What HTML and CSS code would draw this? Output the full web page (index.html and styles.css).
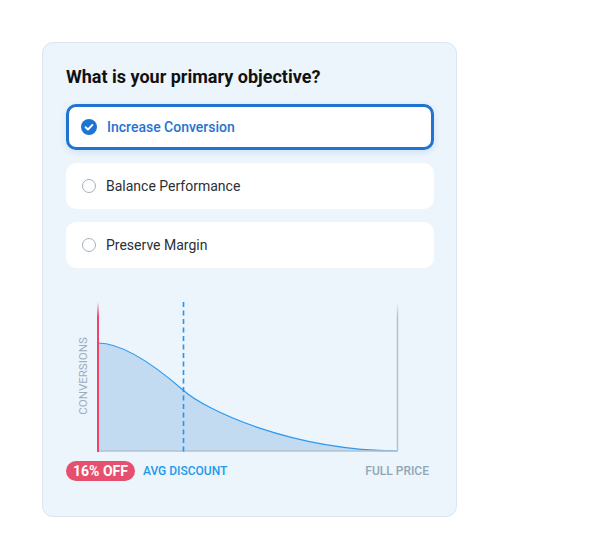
FILE: index.html
```html
<!DOCTYPE html>
<html lang="en">
<head>
  <meta charset="UTF-8">
  <meta name="viewport" content="width=device-width, initial-scale=1.0">
  <title>Objective</title>
  <link rel="stylesheet" href="styles.css">
</head>
<body>
  <div class="card">
    <h2>What is your primary objective?</h2>
    <div class="options">
      <div class="option selected">
        <svg class="check" width="16" height="16" viewBox="0 0 16 16">
          <circle cx="8" cy="8" r="8" fill="#1f74d1"/>
          <path d="M4.6 8.2 L7 10.5 L11.4 5.9" fill="none" stroke="#fff" stroke-width="1.9" stroke-linecap="round" stroke-linejoin="round"/>
        </svg>
        <span>Increase Conversion</span>
      </div>
      <div class="option">
        <span class="radio"></span>
        <span>Balance Performance</span>
      </div>
      <div class="option">
        <span class="radio"></span>
        <span>Preserve Margin</span>
      </div>
    </div>

    <div class="chart">
      <svg width="368" height="160" viewBox="0 0 368 160">
        <defs>
          <linearGradient id="redFade" gradientUnits="userSpaceOnUse" x1="0" y1="6" x2="0" y2="156">
            <stop offset="0" stop-color="#f0436b" stop-opacity="0"/>
            <stop offset="0.1" stop-color="#f0436b" stop-opacity="1"/>
          </linearGradient>
          <linearGradient id="grayFade" gradientUnits="userSpaceOnUse" x1="0" y1="6" x2="0" y2="156">
            <stop offset="0" stop-color="#b3c3d1" stop-opacity="0"/>
            <stop offset="0.1" stop-color="#b3c3d1" stop-opacity="1"/>
          </linearGradient>
        </defs>
        <text class="axis-label" transform="translate(21 80) rotate(-90)" text-anchor="middle">CONVERSIONS</text>
        <path d="M32,47 C59,47 94,74 117,94 C139,114 224,154 331,155 L32,155 Z" fill="#c3dbf1"/>
        <path d="M32,47 C59,47 94,74 117,94 C139,114 224,154 331,155" fill="none" stroke="#2b9af0" stroke-width="1.2"/>
        <line x1="32" y1="155" x2="332" y2="155" stroke="#b3c3d1" stroke-width="1.5"/>
        <line x1="331.5" y1="6" x2="331.5" y2="155" stroke="url(#grayFade)" stroke-width="1.5"/>
        <line x1="32" y1="6" x2="32" y2="156" stroke="url(#redFade)" stroke-width="2"/>
        <line x1="117.5" y1="6" x2="117.5" y2="156" stroke="#2196f3" stroke-width="1.6" stroke-dasharray="5 3.5"/>
      </svg>
      <div class="chart-labels">
        <span class="pill">16% OFF</span>
        <span class="avg">AVG DISCOUNT</span>
        <span class="full">FULL PRICE</span>
      </div>
    </div>
  </div>
</body>
</html>
```

FILE: styles.css
```css
body {
  font-family: Roboto, "Liberation Sans", sans-serif;
  background-color: #ffffff;
  margin: 0;
  padding: 42px;
}
.card {
  width: 368px;
  height: 451px;
  padding: 22px 22px 0 23px;
  background-color: #ecf4fc;
  border: 1px solid #dbe6f1;
  border-radius: 11px;
}
.card h2 {
  margin: 0 0 16px 0;
  font-size: 18px;
  line-height: 23px;
  font-weight: 700;
  color: #111;
}
.options {
  display: flex;
  flex-direction: column;
  gap: 13px;
}
.option {
  display: flex;
  align-items: center;
  gap: 10px;
  height: 46px;
  padding: 0 16px;
  background-color: #fff;
  border-radius: 10px;
  font-size: 14px;
  color: #2b2f36;
  box-sizing: border-box;
}
.option.selected {
  border: 3px solid #1f74d1;
  padding: 0 12px;
  color: #1f74d1;
  font-weight: 500;
  box-shadow: 0 2px 6px rgba(31, 116, 209, 0.15);
}
.option .check {
  flex: none;
}
.option .radio {
  width: 12px;
  height: 12px;
  border: 1.5px solid #a3b2c2;
  border-radius: 50%;
  flex: none;
}
.chart {
  margin-top: 28px;
}
.chart svg {
  display: block;
}
.axis-label {
  font-family: Roboto, "Liberation Sans", sans-serif;
  font-size: 11.5px;
  fill: #9badbd;
}
.chart-labels {
  display: flex;
  align-items: center;
  margin-top: 5px;
  font-size: 12px;
  font-weight: 500;
}
.pill {
  background-color: #e6506e;
  color: #fff;
  font-size: 14px;
  font-weight: 700;
  padding: 1px 7px;
  line-height: 18px;
  border-radius: 10px;
}
.avg {
  margin-left: 8px;
  color: #1e9aea;
}
.full {
  margin-left: auto;
  margin-right: 5px;
  color: #92a6b6;
}
```
